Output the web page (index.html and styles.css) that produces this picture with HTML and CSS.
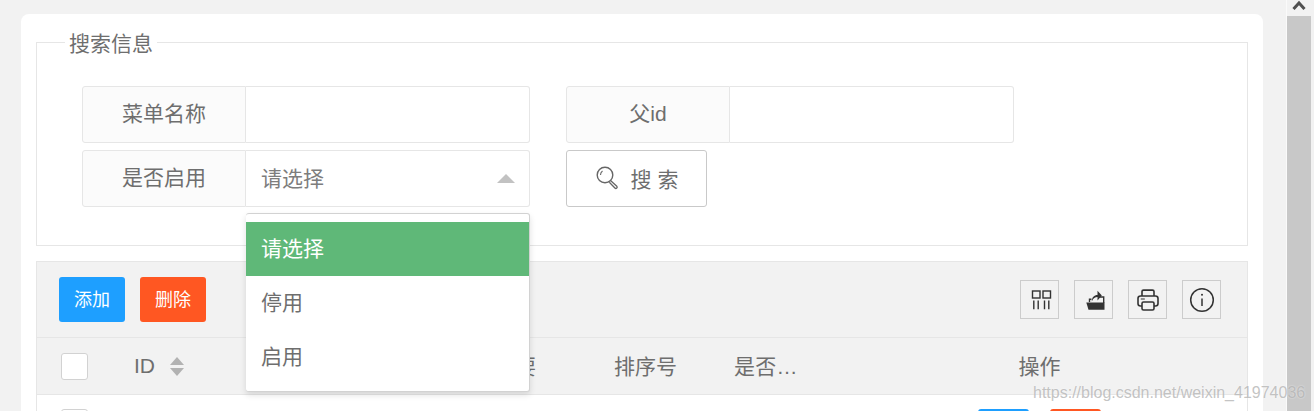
FILE: index.html
```html
<!DOCTYPE html>
<html lang="zh">
<head>
<meta charset="utf-8">
<title>菜单管理</title>
<link rel="stylesheet" href="styles.css">
</head>
<body>
<div class="page">
  <main class="main">
    <div class="card">
      <fieldset class="search">
        <legend class="search-title">搜索信息</legend>
        <div class="form-row">
          <div class="field">
            <label class="field-label">菜单名称</label>
            <div class="field-box"></div>
          </div>
          <div class="field">
            <label class="field-label">父id</label>
            <div class="field-box"></div>
          </div>
        </div>
        <div class="form-row">
          <div class="field">
            <label class="field-label">是否启用</label>
            <div class="field-box select">
              <span class="select-value">请选择</span>
              <span class="select-caret"></span>
              <ul class="dropdown">
                <li class="dropdown-item is-active">请选择</li>
                <li class="dropdown-item">停用</li>
                <li class="dropdown-item">启用</li>
              </ul>
            </div>
          </div>
          <button class="search-btn" type="button">
            <svg class="search-icon" width="28" height="28" viewBox="0 0 28 28" fill="none" stroke="#666">
              <circle cx="10" cy="10" r="7.800" stroke-width="1.400"/>
              <path d="M5.500 10a5 5 0 0 1 2-4" stroke-width="1.100"/>
              <path d="M15.800 15.800l6 5.400a1.300 1.300 0 0 1-1.900 1.800l-5.600-5.800" stroke-width="1.300"/>
            </svg>
            <span class="search-text">搜 索</span>
          </button>
        </div>
      </fieldset>

      <section class="table">
        <div class="toolbar">
          <button class="btn btn-blue" type="button">添加</button>
          <button class="btn btn-orange" type="button">删除</button>
          <div class="tools">
            <span class="tool">
              <svg width="24" height="24" viewBox="0 0 24 24" fill="none" stroke="#333" stroke-width="1.400">
                <rect x="4.500" y="3" width="7.500" height="7"/>
                <rect x="15" y="3" width="7.500" height="7"/>
                <path d="M5.800 12.500v8.700M10.200 12.500v8.700M16.500 12.500v8.700M20.800 12.500v8.700"/>
              </svg>
            </span>
            <span class="tool">
              <svg width="24" height="24" viewBox="0 0 24 24">
                <path d="M7.500 14v-2.800h2M17 9h4.700V15" fill="none" stroke="#333" stroke-width="1.400"/>
                <path d="M4.300 14.400H22.500V21.800H6.500z" fill="#333"/>
                <path d="M9.800 13.500c0-4.200 2.400-6.400 5.700-6.400V2.800l4.300 4.800-4.300 4.800V9.100c-2.400 0-4.200 1-5.700 4.400z" fill="#333"/>
              </svg>
            </span>
            <span class="tool">
              <svg width="24" height="24" viewBox="0 0 24 24" fill="none" stroke="#333" stroke-width="1.600">
                <path d="M6 8V3.600a1.500 1.500 0 0 1 1.500-1.500h9A1.500 1.500 0 0 1 18 3.600V8"/>
                <path d="M6 18H4.500A2.500 2.500 0 0 1 2 15.500V10.500A2.500 2.500 0 0 1 4.500 8h15a2.500 2.500 0 0 1 2.500 2.500v5a2.500 2.500 0 0 1-2.500 2.500H18"/>
                <rect x="6" y="14" width="12" height="8" rx="1.500"/>
                <path d="M4.800 11h4" stroke-width="1"/>
              </svg>
            </span>
            <span class="tool">
              <svg width="26" height="26" viewBox="0 0 26 26" fill="none" stroke="#333">
                <circle cx="13" cy="13" r="11.300" stroke-width="1.500"/>
                <path d="M13 11.500v7.500" stroke-width="1.500"/>
                <circle cx="13" cy="7.800" r="1" fill="#333" stroke="none"/>
              </svg>
            </span>
          </div>
        </div>
        <div class="grid-row grid-head">
          <span class="checkbox"></span>
          <span class="col-id">ID<span class="sort"><i class="sort-up"></i><i class="sort-down"></i></span></span>
          <span class="col-text">摘要</span>
          <span class="col-text">排序号</span>
          <span class="col-text col-clip">是否…</span>
          <span class="col-text col-action">操作</span>
        </div>
        <div class="grid-row grid-body">
          <span class="checkbox"></span>
          <span></span>
          <span></span>
          <span></span>
          <span></span>
          <span class="row-actions">
            <span class="btn-small btn-blue"></span>
            <span class="btn-small btn-orange"></span>
          </span>
        </div>
      </section>
    </div>
  </main>
  <aside class="scrollbar">
    <svg class="scroll-arrow" width="14" height="10" viewBox="0 0 14 10" fill="none" stroke="#505050" stroke-width="3">
      <path d="M1.500 9L7 3l5.500 6"/>
    </svg>
    <div class="scroll-thumb"></div>
  </aside>
</div>
<div class="watermark">https://blog.csdn.net/weixin_41974036</div>
</body>
</html>
```
FILE: styles.css
```css
* { box-sizing: border-box; }
html, body {
  margin: 0;
  height: 411px;
  overflow: hidden;
  background: #f2f2f2;
  font-family: "Liberation Sans", "Noto Sans CJK SC", sans-serif;
  color: #6e6e6e;
  font-size: 21px;
}
.page { display: flex; height: 411px; }
.main { width: 1286px; padding: 14px 23px 0 21px; }
.card {
  width: 1242px;
  height: 420px;
  padding: 14px 15px 0;
  background: #fff;
  border-radius: 8px;
}
.search {
  margin: 0;
  padding: 30px 0 38px;
  height: 218px;
  border: 1px solid #e6e6e6;
  min-inline-size: 0;
}
.search-title {
  margin-left: 28px;
  padding: 0 4px;
  font-size: 21px;
  line-height: 32px;
  height: 28px;
}
.form-row { display: flex; gap: 36px; margin-bottom: 7px; padding-left: 45px; }
.field { display: flex; width: 448px; height: 57px; }
.field-label {
  width: 164px;
  border: 1px solid #e6e6e6;
  border-radius: 3px 0 0 3px;
  background: #fbfbfb;
  text-align: center;
  line-height: 53px;
}
.field-box {
  flex: 1;
  border: 1px solid #e6e6e6;
  border-left: 0;
  border-radius: 0 3px 3px 0;
  background: #fff;
}
.select {
  position: relative;
  display: flex;
  align-items: center;
  justify-content: space-between;
  padding: 0 14px 0 15px;
  color: #7d7d7d;
}
.select-value { margin-bottom: 4px; }
.select-caret {
  width: 0;
  height: 0;
  border: 9px solid transparent;
  border-top: 0;
  border-bottom: 9px solid #c2c2c2;
}
.dropdown {
  position: absolute;
  z-index: 5;
  top: 62px;
  left: 0;
  width: 284px;
  height: 179px;
  margin: 0;
  padding: 8px 0 7px;
  list-style: none;
  background: #fff;
  border: 1px solid #d2d2d2;
  border-left-width: 0;
  border-radius: 3px;
  box-shadow: 0 3px 6px rgba(0, 0, 0, .12);
  color: #6e6e6e;
}
.dropdown-item { height: 54px; line-height: 54px; padding-left: 15px; }
.is-active { background: #5fb878; color: #fff; }
.search-btn {
  display: flex;
  align-items: center;
  justify-content: center;
  gap: 8px;
  width: 141px;
  height: 57px;
  padding: 0;
  background: #fff;
  border: 1px solid #c9c9c9;
  border-radius: 3px;
  color: #6e6e6e;
  font: inherit;
  font-size: 21px;
  white-space: pre;
}
.search-icon { flex: none; margin-top: 1px; }
.search-text { padding-bottom: 2px; }
.table {
  margin-top: 15px;
  height: 200px;
  border: 1px solid #e6e6e6;
  background: #fff;
}
.toolbar {
  display: flex;
  align-items: center;
  gap: 15px;
  height: 76px;
  padding: 0 26px 1px 22px;
  background: #f2f2f2;
  border-bottom: 1px solid #e6e6e6;
}
.btn {
  width: 66px;
  height: 45px;
  padding: 0 0 2px;
  border: 0;
  border-radius: 3px;
  color: #fff;
  font: inherit;
  font-size: 18px;
}
.btn-blue { background: #1e9fff; }
.btn-orange { background: #ff5722; }
.tools { display: flex; gap: 15px; margin-left: auto; padding-top: 1px; }
.tool {
  display: flex;
  align-items: center;
  justify-content: center;
  width: 39px;
  height: 39px;
  border: 1px solid #ccc;
}
.grid-row {
  display: grid;
  grid-template-columns: 73px 360px 120px 120px 244px 123px;
  align-items: center;
  padding-left: 24px;
}
.grid-head {
  height: 57px;
  background: #f2f2f2;
  border-bottom: 1px solid #e6e6e6;
}
.grid-body { align-items: start; padding-top: 14px; }
.checkbox {
  display: block;
  width: 27px;
  height: 27px;
  background: #fff;
  border: 1px solid #d2d2d2;
  border-radius: 3px;
}
.col-id { display: flex; align-items: center; gap: 15px; }
.col-text { padding-bottom: 2px; }
.sort { display: flex; flex-direction: column; gap: 3px; }
.sort-up, .sort-down {
  width: 0;
  height: 0;
  border: 7px solid transparent;
}
.sort-up { border-top: 0; border-bottom: 8px solid #b2b2b2; }
.sort-down { border-bottom: 0; border-top: 8px solid #b2b2b2; }
.col-clip { white-space: nowrap; letter-spacing: .3px; }
.col-action { text-align: center; }
.row-actions { display: flex; gap: 21px; }
.btn-small {
  display: block;
  width: 51px;
  height: 33px;
  border-radius: 3px;
}
.scrollbar {
  width: 28px;
  border-left: 1px solid #fafafa;
}
.scroll-arrow { display: block; margin: 0 0 6px 5px; }
.scroll-thumb { width: 24px; height: 395px; background: #c8c8c8; }
.watermark {
  position: absolute;
  left: 1033px;
  top: 383px;
  font-size: 16px;
  line-height: 20px;
  color: rgba(170, 170, 170, .7);
  text-shadow: 0 0 2px rgba(255, 255, 255, .7);
  white-space: nowrap;
}
```
